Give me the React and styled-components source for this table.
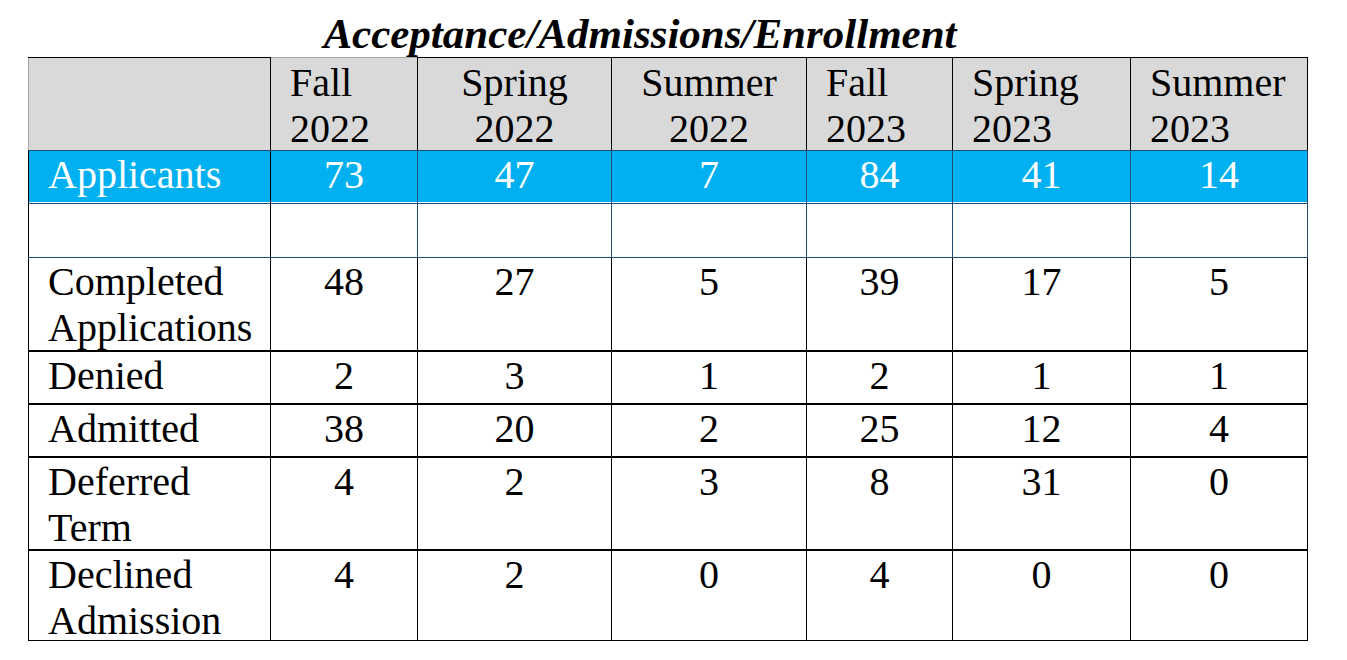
import React from 'react'
import styled, { createGlobalStyle } from 'styled-components'

const GlobalStyle = createGlobalStyle`
  body {
    margin: 0;
    background: #ffffff;
    font-family: "Liberation Serif", "Times New Roman", serif;
  }
`

const Page = styled.div`
  padding: 10px 0 0 28px;
  font-family: "Liberation Serif", "Times New Roman", serif;
`

const Title = styled.h1`
  width: 1224px;
  margin: 0;
  font-family: "Liberation Serif", "Times New Roman", serif;
  font-size: 43px;
  line-height: 47px;
  font-weight: bold;
  font-style: italic;
  text-align: center;
  color: #000;
`

const Table = styled.table`
  border-collapse: collapse;
  table-layout: fixed;
  width: 1279px;
  font-family: "Liberation Serif", "Times New Roman", serif;
  font-size: 40px;
  line-height: 46px;
  color: #000;
`

const Row = styled.tr`
  height: ${p => p.h}px;
`

const Cell = styled.td`
  padding: ${p => p.pt || 0}px 6px 0 ${p => (p.align === 'center' ? 6 : 19)}px;
  vertical-align: top;
  text-align: ${p => p.align || 'left'};
  border: 1px solid #000;
  ${p => p.thickTop && 'border-top: 2px solid #000;'}
`

// lets wrapped text run a few px past the row edge, like the Word table does
const Text = styled.div`
  margin-bottom: -4px;
`

const HeadCell = styled(Cell)`
  background: #d9d9d9;
  ${p => p.first && 'border-left-color: #a6a6a6;'}
  ${p => p.greyTop && 'border-top-color: #a6a6a6;'}
  border-bottom: 1px solid #1f4e79;
`

const BlueCell = styled(Cell)`
  background: #00b0f0;
  color: #fff;
  border-color: #1f4e79;
  ${p => p.first && 'border-right-color: #000; border-left-color: #000;'}
  box-shadow: inset 0 -1px 0 #ffffff;
`

const EmptyCell = styled(Cell)`
  border-color: #1f4e79;
  ${p => p.first && 'border-right-color: #000; border-left-color: #000;'}
`

const terms = [
  { season: 'Fall', year: '2022', align: 'left' },
  { season: 'Spring', year: '2022', align: 'center' },
  { season: 'Summer', year: '2022', align: 'center' },
  { season: 'Fall', year: '2023', align: 'left' },
  { season: 'Spring', year: '2023', align: 'left' },
  { season: 'Summer', year: '2023', align: 'left' },
]

const widths = [242, 147, 194, 195, 146, 178, 177]

const rows = [
  { label: ['Completed', 'Applications'], values: [48, 27, 5, 39, 17, 5], h: 93 },
  { label: ['Denied'], values: [2, 3, 1, 2, 1, 1], h: 53, thick: true },
  { label: ['Admitted'], values: [38, 20, 2, 25, 12, 4], h: 53, thick: true },
  { label: ['Deferred', 'Term'], values: [4, 2, 3, 8, 31, 0], h: 93, thick: true },
  { label: ['Declined', 'Admission'], values: [4, 2, 0, 4, 0, 0], h: 91, thick: true },
]

const applicants = [73, 47, 7, 84, 41, 14]

export default function App() {
  return (
    <Page>
      <GlobalStyle />
      <Title>Acceptance/Admissions/Enrollment</Title>
      <Table>
        <colgroup>
          {widths.map((w, i) => (
            <col key={i} style={{ width: w }} />
          ))}
        </colgroup>
        <tbody>
          <Row h={93}>
            <HeadCell first />
            {terms.map((t, i) => (
              <HeadCell key={i} align={t.align} greyTop={i === 0} pt={2}>
                <Text>
                  {t.season}
                  <br />
                  {t.year}
                </Text>
              </HeadCell>
            ))}
          </Row>
          <Row h={53}>
            <BlueCell first pt={1}>Applicants</BlueCell>
            {applicants.map((n, i) => (
              <BlueCell key={i} align="center" pt={1}>{n}</BlueCell>
            ))}
          </Row>
          <Row h={54}>
            <EmptyCell first />
            {applicants.map((_, i) => (
              <EmptyCell key={i} />
            ))}
          </Row>
          {rows.map((r, ri) => (
            <Row key={ri} h={r.h}>
              <Cell thickTop={r.thick} pt={1}>
                <Text>
                  {r.label.map((l, li) => (
                    <React.Fragment key={li}>
                      {li > 0 && <br />}
                      {l}
                    </React.Fragment>
                  ))}
                </Text>
              </Cell>
              {r.values.map((v, vi) => (
                <Cell key={vi} align="center" thickTop={r.thick} pt={1}>{v}</Cell>
              ))}
            </Row>
          ))}
        </tbody>
      </Table>
    </Page>
  )
}
